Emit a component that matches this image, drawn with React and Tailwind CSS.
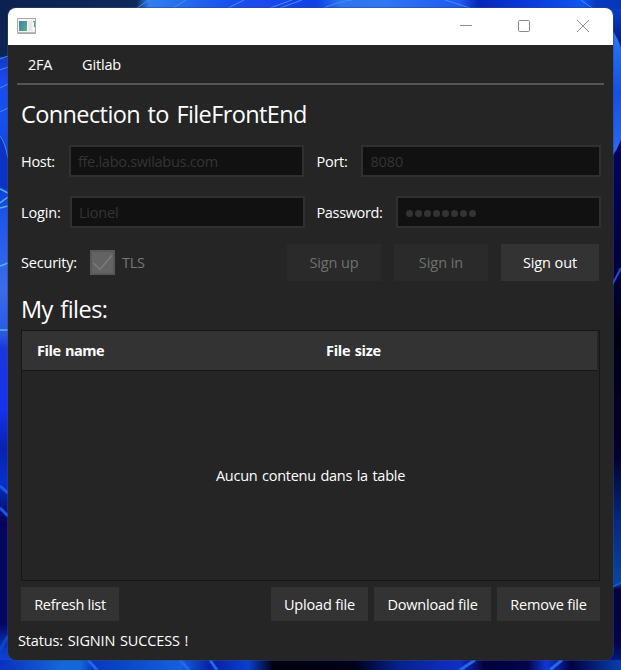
import React from 'react';

function Wallpaper() {
  return (
    <svg className="absolute inset-0 h-full w-full" viewBox="0 0 621 670" preserveAspectRatio="none" aria-hidden="true">
      <defs>
        <linearGradient id="left" x1="0" y1="0" x2="0" y2="1">
          <stop offset="0" stopColor="#0b2250" />
          <stop offset="0.084" stopColor="#0d2456" />
          <stop offset="0.086" stopColor="#1238c8" />
          <stop offset="0.12" stopColor="#1a4af0" />
          <stop offset="0.18" stopColor="#1650ee" />
          <stop offset="0.27" stopColor="#0b38d8" />
          <stop offset="0.32" stopColor="#1c55e8" />
          <stop offset="0.43" stopColor="#3a6cec" />
          <stop offset="0.5" stopColor="#2a58e4" />
          <stop offset="0.52" stopColor="#1c35e0" />
          <stop offset="0.61" stopColor="#1432f0" />
          <stop offset="0.67" stopColor="#0822b0" />
          <stop offset="0.72" stopColor="#0630c8" />
          <stop offset="0.78" stopColor="#05045a" />
          <stop offset="0.93" stopColor="#040660" />
          <stop offset="0.97" stopColor="#0a38c8" />
          <stop offset="1" stopColor="#0c50d8" />
        </linearGradient>
        <linearGradient id="right" x1="0" y1="0" x2="0" y2="1">
          <stop offset="0" stopColor="#0a46d0" />
          <stop offset="0.03" stopColor="#0733b8" />
          <stop offset="0.06" stopColor="#041f88" />
          <stop offset="0.24" stopColor="#03045a" />
          <stop offset="0.4" stopColor="#02023c" />
          <stop offset="0.5" stopColor="#010114" />
          <stop offset="0.68" stopColor="#02022c" />
          <stop offset="0.78" stopColor="#052a80" />
          <stop offset="0.87" stopColor="#0845a0" />
          <stop offset="0.88" stopColor="#03033c" />
          <stop offset="0.96" stopColor="#03044c" />
          <stop offset="1" stopColor="#04259c" />
        </linearGradient>
        <linearGradient id="petal" x1="0" y1="0" x2="0" y2="1">
          <stop offset="0" stopColor="#2a78f5" />
          <stop offset="0.5" stopColor="#1450e8" />
          <stop offset="1" stopColor="#2a6cf0" />
        </linearGradient>
        <linearGradient id="top" x1="0" y1="0" x2="1" y2="0">
          <stop offset="0" stopColor="#0b2250" />
          <stop offset="0.22" stopColor="#0d2a5c" />
          <stop offset="0.24" stopColor="#2f80f0" />
          <stop offset="0.37" stopColor="#1850ee" />
          <stop offset="0.43" stopColor="#1a48f0" />
          <stop offset="0.51" stopColor="#1040e8" />
          <stop offset="0.55" stopColor="#2c74f2" />
          <stop offset="0.62" stopColor="#2f78f4" />
          <stop offset="0.74" stopColor="#2058f0" />
          <stop offset="0.77" stopColor="#0528b8" />
          <stop offset="0.86" stopColor="#0a3ce0" />
          <stop offset="0.94" stopColor="#0f58f0" />
          <stop offset="0.96" stopColor="#0838c0" />
          <stop offset="1" stopColor="#0636b8" />
        </linearGradient>
        <linearGradient id="bottom" x1="0" y1="0" x2="1" y2="0">
          <stop offset="0" stopColor="#0a30c0" />
          <stop offset="0.1" stopColor="#1268d8" />
          <stop offset="0.13" stopColor="#1268d8" />
          <stop offset="0.15" stopColor="#0838c0" />
          <stop offset="0.2" stopColor="#0848c8" />
          <stop offset="0.29" stopColor="#1560e0" />
          <stop offset="0.34" stopColor="#0620a0" />
          <stop offset="0.4" stopColor="#0b3fd0" />
          <stop offset="0.44" stopColor="#010110" />
          <stop offset="0.57" stopColor="#010118" />
          <stop offset="0.64" stopColor="#06208c" />
          <stop offset="0.74" stopColor="#1030c8" />
          <stop offset="0.78" stopColor="#02023c" />
          <stop offset="0.85" stopColor="#03044c" />
          <stop offset="0.88" stopColor="#1038d8" />
          <stop offset="0.92" stopColor="#020240" />
          <stop offset="1" stopColor="#0840b0" />
        </linearGradient>
      </defs>
      <rect width="310" height="670" fill="url(#left)" />
      <rect x="310" width="311" height="670" fill="url(#right)" />
      <rect width="621" height="9" fill="url(#top)" />
      <rect y="660" width="621" height="10" fill="url(#bottom)" />
      <path d="M612 30Q618 38 621 48V140Q617 150 612 157Z" fill="url(#petal)" />
      <path d="M0 136Q5 142 8 158V190L0 186Z" fill="#0c34c4" />
      <g fill="none" stroke="#3f90f0">
        <path d="M0 59L8 56M0 70L8 67M0 88L8 84M0 112L8 108" />
        <path d="M0 136Q5 142 8 158" />
        <path d="M0 189L8 193M0 203L8 197M0 208L8 206M0 266L8 263M0 330H8" stroke="#50b4ee" strokeWidth="1.5" />
        <path d="M0 486L8 493M0 508L8 516" stroke="#1858e8" strokeWidth="3" />
        <path d="M0 650L8 636" stroke="#0b48c8" strokeWidth="3" />
        <path d="M137 8L149 0M173 8L186 0M228 8L244 0M270 8L292 0M280 8L302 0M324 8Q340 1 352 0M445 0L470 8M581 0L592 8" />
        <path d="M612 285L621 268M612 587L621 583" stroke="#1d50d8" strokeWidth="2" />
        <path d="M88 660L97 670M180 660L189 670M210 660L217 670M460 670L475 660M550 670L562 660" stroke="#2068f0" strokeWidth="3" />
      </g>
    </svg>
  );
}

function AppIcon() {
  return (
    <svg className="h-4 w-[19px]" viewBox="0 0 19 16" aria-hidden="true">
      <defs>
        <linearGradient id="pane" x1="0" y1="0" x2="1" y2="1">
          <stop offset="0" stopColor="#3f7fa8" />
          <stop offset="1" stopColor="#5cb083" />
        </linearGradient>
      </defs>
      <rect x="0.5" y="0.5" width="18" height="14.5" fill="#f4f4f4" stroke="#a9a9b0" />
      <path d="M1 15.2H18.5" stroke="#8f8f98" />
      <rect x="2" y="3" width="8" height="10" fill="url(#pane)" />
      <rect x="11" y="3" width="4" height="10" fill="#e8e8e8" />
      <path d="M16 3.5H17.5V9" stroke="#55a584" fill="none" />
    </svg>
  );
}

const input = 'flex h-8 items-center border-2 border-[#303030] bg-[#111111] pt-0.5 pl-[7px] text-[#343434]';
const button = 'flex items-center justify-center';
const enabled = 'bg-[#333333] text-white';
const disabled = 'bg-[#2a2a2a] text-[#707070]';

export default function App() {
  return (
    <div className="relative h-[670px] w-[621px] overflow-hidden bg-[#0b2250] px-2 pt-2 font-['Open_Sans','Noto_Sans',sans-serif] text-[14.5px] leading-5 tracking-[-0.28px] whitespace-nowrap text-white [word-spacing:1px]">
      <Wallpaper />
      <div className="relative flex h-[652px] w-[605px] flex-col overflow-hidden rounded-lg bg-[#252525] shadow-[0_0_0_1px_#3c466880]">
        <header className="flex h-[37px] shrink-0 justify-between bg-white">
          <div className="pt-[10px] pl-[9px]"><AppIcon /></div>
          <svg className="mr-2 h-[37px] w-[145px]" viewBox="0 0 145 37" fill="none" stroke="#8b8b8b" aria-hidden="true">
            <path d="M0 17.5H12" />
            <rect x="58.5" y="12.5" width="11" height="11" rx="1" />
            <path d="M117 12L129 24M129 12L117 24" />
          </svg>
        </header>

        <nav className="mx-[9px] flex h-10 shrink-0 items-center gap-[29px] border-b-2 border-[#555555] pt-0.5 pl-[11px]">
          <span className="w-[25px] tracking-[-0.2px]">2FA</span>
          <span className="tracking-[-0.15px]">Gitlab</span>
        </nav>

        <main className="flex flex-1 flex-col pr-3 pl-[13px]">
          <h1 className="mt-[13px] h-8 text-[23.5px] leading-8 tracking-[-0.6px] [word-spacing:2px]">Connection to FileFrontEnd</h1>

          <div className="mt-[15px] flex h-8 items-center">
            <label className="w-12 pt-0.5">Host:</label>
            <div className={`${input} w-[235px]`}>ffe.labo.swilabus.com</div>
            <label className="ml-[13px] w-[45px] pt-0.5">Port:</label>
            <div className={`${input} w-60 tracking-[-0.1px]`}>8080</div>
          </div>

          <div className="mt-[19px] flex h-8 items-center">
            <label className="w-[49px] pt-0.5 tracking-[-0.15px]">Login:</label>
            <div className={`${input} w-[235px] tracking-[-0.2px]`}>Lionel</div>
            <label className="ml-3 w-20 pt-0.5 tracking-[-0.35px]">Password:</label>
            <div className={`${input} w-[205px] gap-[2px]`}>
              {Array.from({ length: 8 }, (_, i) => (
                <span key={i} className="h-[7px] w-[7px] rounded-full bg-[#343434] first:ml-px" />
              ))}
            </div>
          </div>

          <div className="mt-4 flex h-[37px] items-center">
            <label className="w-[69px] tracking-[-0.2px]">Security:</label>
            <div className="h-[25px] w-[25px] border-2 border-[#585858] bg-[#636363]">
              <svg className="h-[21px] w-[21px]" viewBox="0 0 21 21" fill="none" stroke="#7c7c7c" strokeWidth="1.5" aria-hidden="true">
                <path d="M1.5 11L8 17.5L20 3.5" />
              </svg>
            </div>
            <span className="ml-[7px] w-[165px] tracking-[-0.3px] text-[#777777]">TLS</span>
            <div className="flex h-[37px] gap-[13px]">
              <button className={`${button} ${disabled} w-[94px] tracking-[-0.15px]`}>Sign up</button>
              <button className={`${button} ${disabled} w-[94px] tracking-[-0.05px]`}>Sign in</button>
              <button className={`${button} ${enabled} w-[98px] tracking-[-0.1px]`}>Sign out</button>
            </div>
          </div>

          <h2 className="mt-3 h-8 text-[23.5px] leading-8 tracking-[-0.55px] [word-spacing:2px]">My files:</h2>

          <section className="mt-[5px] flex h-[251px] w-[579px] flex-col border border-[#161616]">
            <div className="flex h-10 w-[575px] shrink-0 items-center border-b border-[#161616] bg-[#333333] pl-[15px] font-bold">
              <span className="w-[289px] tracking-[-0.45px]">File name</span>
              <span className="tracking-[-0.3px]">File size</span>
            </div>
            <div className="flex flex-1 items-center justify-center tracking-[-0.25px]">Aucun contenu dans la table</div>
          </section>

          <div className="mt-[6px] flex h-[34px] w-[579px] gap-[6px]">
            <button className={`${button} ${enabled} mr-auto w-[98px] pt-0.5`}>Refresh list</button>
            <button className={`${button} ${enabled} w-[97px] pt-0.5 tracking-[-0.15px]`}>Upload file</button>
            <button className={`${button} ${enabled} w-[117px] pt-0.5 tracking-[-0.2px]`}>Download file</button>
            <button className={`${button} ${enabled} w-[103px] pt-0.5 tracking-[-0.2px]`}>Remove file</button>
          </div>
        </main>
        <footer className="h-[29px] shrink-0 pl-[10px] tracking-[-0.13px]">Status: SIGNIN SUCCESS !</footer>
      </div>
    </div>
  );
}
